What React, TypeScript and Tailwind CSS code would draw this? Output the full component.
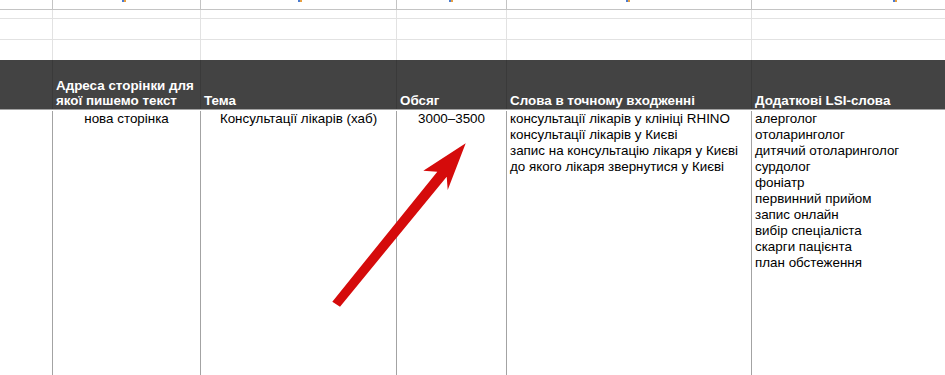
import React from "react";

const cols = "grid-cols-[53px_148px_196px_110px_245px_1fr]";

function TopRow({ h, line, vline }: { h: string; line: string; vline: string }) {
  return (
    <div className={`grid ${cols} ${h} border-b ${line}`}>
      {[0, 1, 2, 3, 4].map((i) => (
        <div key={i} className={`border-r ${vline}`} />
      ))}
      <div />
    </div>
  );
}

const lsi = [
  "алерголог",
  "отоларинголог",
  "дитячий отоларинголог",
  "сурдолог",
  "фоніатр",
  "первинний прийом",
  "запис онлайн",
  "вибір спеціаліста",
  "скарги пацієнта",
  "план обстеження",
];

const exact = [
  "консультації лікарів у клініці RHINO",
  "консультації лікарів у Києві",
  "запис на консультацію лікаря у Києві",
  "до якого лікаря звернутися у Києві",
];

function Mark({ x }: { x: string }) {
  return (
    <div className={`absolute top-0 ${x} flex h-[2px]`}>
      <div className="w-[2px] bg-[#4a7bd0]" />
      <div className="w-[2px] bg-[#e8a040]" />
    </div>
  );
}

export default function App() {
  return (
    <div
      className="relative w-[945px] h-[375px] overflow-hidden bg-white text-[13.4px] text-black"
      style={{ fontFamily: '"Liberation Sans", Arial, sans-serif' }}
    >
      <TopRow h="h-[10px]" line="border-[#c4c4c4]" vline="border-[#c4c4c4]" />
      <TopRow h="h-[9px]" line="border-[#e2e2e2]" vline="border-[#e2e2e2]" />
      <TopRow h="h-[21px]" line="border-[#e2e2e2]" vline="border-[#e2e2e2]" />
      <div className={`grid ${cols} h-[20px]`}>
        {[0, 1, 2, 3, 4].map((i) => (
          <div key={i} className="border-r border-[#e2e2e2]" />
        ))}
        <div />
      </div>

      {/* header */}
      <div
        className={`grid ${cols} h-[50px] bg-[#434343] border-b border-[#a3a3a3] text-white font-bold leading-[15px]`}
      >
        <div className="border-r border-[#3a3a3a]" />
        <div className="border-r border-[#3a3a3a] flex items-end px-[3px] pb-[1px]">
          Адреса сторінки для якої пишемо текст
        </div>
        <div className="border-r border-[#3a3a3a] flex items-end px-[3px] pb-[1px]">Тема</div>
        <div className="border-r border-[#3a3a3a] flex items-end px-[3px] pb-[1px]">Обсяг</div>
        <div className="border-r border-[#3a3a3a] flex items-end px-[3px] pb-[1px]">
          Слова в точному входженні
        </div>
        <div className="flex items-end px-[3px] pb-[1px]">Додаткові LSI-слова</div>
      </div>

      {/* body */}
      <div className={`grid ${cols} h-[265px] leading-[16px] pt-[1px]`}>
        <div className="border-r border-[#a3a3a3]" />
        <div className="border-r border-[#a3a3a3] text-center px-[3px]">нова сторінка</div>
        <div className="border-r border-[#a3a3a3] text-center px-[3px]">
          Консультації лікарів (хаб)
        </div>
        <div className="border-r border-[#a3a3a3] text-center px-[3px]">3000–3500</div>
        <div className="border-r border-[#a3a3a3] px-[3px] flex flex-col">
          {exact.map((t) => (
            <span key={t}>{t}</span>
          ))}
        </div>
        <div className="px-[3px] flex flex-col">
          {lsi.map((t) => (
            <span key={t}>{t}</span>
          ))}
        </div>
      </div>

      <Mark x="left-[122px]" />
      <Mark x="left-[298px]" />
      <Mark x="left-[449px]" />
      <Mark x="left-[626px]" />
      <Mark x="left-[893px]" />

      {/* arrow overlay */}
      <svg className="absolute left-0 top-0" width="945" height="375" viewBox="0 0 945 375">
        <polygon
          points="465.7,143.3 423.3,170.7 437.3,171.7 332.3,301.7 340,306.7 446.7,176.7 447.7,190"
          fill="#d50b0b"
        />
      </svg>
    </div>
  );
}
